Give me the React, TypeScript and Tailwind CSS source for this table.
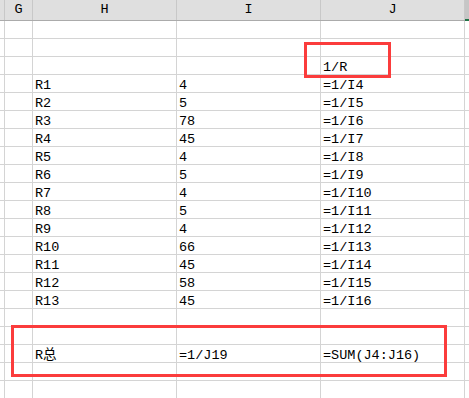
import React from "react";

const rows: [string, string, string][] = [
  ["", "", ""],
  ["", "", ""],
  ["", "", "1/R"],
  ["R1", "4", "=1/I4"],
  ["R2", "5", "=1/I5"],
  ["R3", "78", "=1/I6"],
  ["R4", "45", "=1/I7"],
  ["R5", "4", "=1/I8"],
  ["R6", "5", "=1/I9"],
  ["R7", "4", "=1/I10"],
  ["R8", "5", "=1/I11"],
  ["R9", "4", "=1/I12"],
  ["R10", "66", "=1/I13"],
  ["R11", "45", "=1/I14"],
  ["R12", "58", "=1/I15"],
  ["R13", "45", "=1/I16"],
  ["", "", ""],
  ["", "", ""],
  ["R总", "=1/J19", "=SUM(J4:J16)"],
  ["", "", ""],
  ["", "", ""],
];

const cols = "grid grid-cols-[5px_28px_144px_144px_144px_1fr]";

const Cell = ({ text }: { text: string }) => (
  <div className="h-[18px] border-r border-b border-[#d4d4d4] flex items-end pl-[2px] leading-none whitespace-nowrap overflow-visible">
    {text}
  </div>
);

export default function App() {
  return (
    <div
      className="relative w-[469px] h-[398px] overflow-hidden bg-white text-black text-[13.5px]"
      style={{ fontFamily: '"Liberation Mono", "Noto Sans CJK SC", monospace' }}>
      <div className={`${cols} h-[21px] bg-[#dfdfdf] border-b border-[#ababab]`}>
        <div className="border-r border-[#c8c8c8]" />
        <div className="border-r border-[#c8c8c8] flex items-center justify-center">G</div>
        <div className="border-r border-[#c8c8c8] flex items-center justify-center">H</div>
        <div className="border-r border-[#c8c8c8] flex items-center justify-center">I</div>
        <div className="border-r border-[#c8c8c8] flex items-center justify-center">J</div>
        <div className="bg-[#c6c6c6] border-b-2 border-[#217346] -mb-[1px]" />
      </div>
      {rows.map((r, i) => (
        <div key={i} className={cols}>
          <Cell text="" />
          <Cell text="" />
          <Cell text={r[0]} />
          <Cell text={r[1]} />
          <Cell text={r[2]} />
          <div className="h-[18px] border-b border-[#d4d4d4]" />
        </div>
      ))}
      <div className="absolute left-[304px] top-[42px] w-[87px] h-[36px] border-[3px] border-[#fb3c3c]" />
      <div className="absolute left-[11px] top-[325px] w-[436px] h-[52px] border-[3px] border-[#fb3c3c]" />
    </div>
  );
}
